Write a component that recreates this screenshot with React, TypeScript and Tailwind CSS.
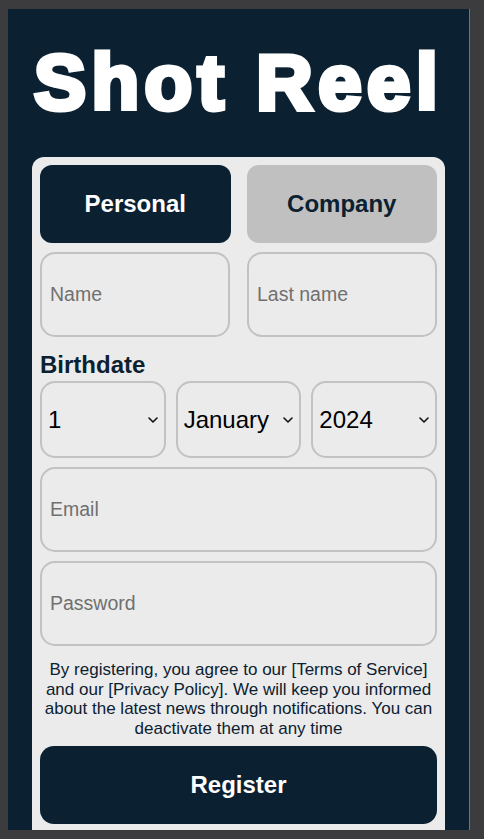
import React from "react";

const font = { fontFamily: '"Liberation Sans", Arial, sans-serif' };

function Chevron() {
  return (
    <svg width="10" height="6" viewBox="0 0 10 6" className="pointer-events-none absolute right-[8px] top-1/2 -translate-y-1/2">
      <path d="M1 1 L5 5 L9 1" fill="none" stroke="#111" strokeWidth="1.6" strokeLinecap="round" strokeLinejoin="round" />
    </svg>
  );
}

function Select({ value, options }: { value: string; options: string[] }) {
  return (
    <div className="relative flex-1">
      <select
        defaultValue={value}
        className="h-[77px] w-full appearance-none rounded-[15px] border-2 border-[#c2c2c2] bg-transparent pl-[6px] pr-[20px] text-[24px] text-black outline-none"
      >
        {options.map((o) => (
          <option key={o}>{o}</option>
        ))}
      </select>
      <Chevron />
    </div>
  );
}

export default function App() {
  const days = Array.from({ length: 31 }, (_, i) => String(i + 1));
  const months = ["January", "February", "March", "April", "May", "June", "July", "August", "September", "October", "November", "December"];
  const years = Array.from({ length: 100 }, (_, i) => String(2024 - i));
  const inputCls =
    "h-[85px] w-full rounded-[15px] border-2 border-[#c2c2c2] bg-transparent px-[8px] text-[19.5px] text-black outline-none placeholder:text-[#707070]";
  return (
    <div className="h-[839px] w-[484px] overflow-hidden bg-[#3c3b3e] pl-[8px] pt-[9px]" style={font}>
      <div className="flex h-[821px] w-[462px] flex-col items-center overflow-hidden border-r border-[#6a7684] bg-[#0b2131] px-[24px] pt-[34px]">
        <h1 className="h-[78px] whitespace-nowrap text-center text-[78px] font-bold leading-none tracking-[5.5px] text-white [-webkit-text-stroke:5px_white]">
          Shot Reel
        </h1>
        <div className="mt-[36px] flex w-full flex-col rounded-[12px] bg-[#ebebeb] p-[8px] pb-[40px]">
          <div className="flex gap-[16px]">
            <button className="h-[78px] flex-1 rounded-[12px] bg-[#0b2131] text-[24px] font-bold text-white">Personal</button>
            <button className="h-[78px] flex-1 rounded-[12px] bg-[#c0c0c0] text-[24px] font-bold text-[#0b2131]">Company</button>
          </div>
          <div className="mt-[9px] flex gap-[17px]">
            <input className={inputCls} placeholder="Name" />
            <input className={inputCls} placeholder="Last name" />
          </div>
          <div className="mt-[14px] text-[24px] font-bold leading-[27px] text-[#0b2131]">Birthdate</div>
          <div className="mt-[3px] flex gap-[10px]">
            <Select value="1" options={days} />
            <Select value="January" options={months} />
            <Select value="2024" options={years} />
          </div>
          <input className={"mt-[9px] " + inputCls} placeholder="Email" />
          <input type="password" className={"mt-[9px] " + inputCls} placeholder="Password" />
          <p className="mt-[14px] text-center text-[17px] leading-[19.5px] text-[#0b2131]">
            By registering, you agree to our [Terms of Service] and our [Privacy Policy]. We will keep you informed about the latest news through notifications. You can deactivate them at any time
          </p>
          <button className="mt-[8px] h-[78px] w-full rounded-[14px] bg-[#0b2131] text-[24px] font-bold text-white">Register</button>
        </div>
      </div>
    </div>
  );
}
